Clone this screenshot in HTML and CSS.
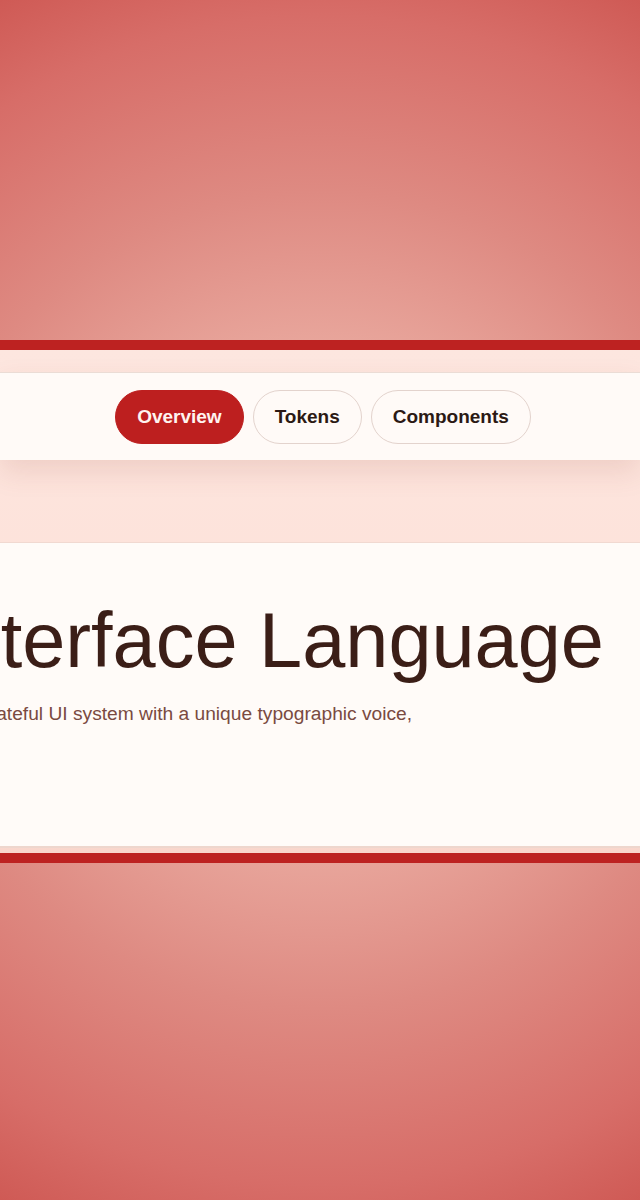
FILE: index.html
```html
<!DOCTYPE html>
<html lang="en">
<head>
<meta charset="utf-8">
<title>Interface Language</title>
<link rel="stylesheet" href="styles.css">
</head>
<body>
  <section class="band">
    <nav class="nav">
      <div class="pills">
        <a class="pill pill-active" href="#overview">Overview</a>
        <a class="pill" href="#tokens">Tokens</a>
        <a class="pill" href="#components">Components</a>
      </div>
    </nav>
    <main class="card">
      <div class="hero">
        <h1 class="title">Interface Language</h1>
        <p class="lead">It's a stateful UI system with a unique typographic voice,</p>
      </div>
    </main>
  </section>
</body>
</html>
```
FILE: styles.css
```css
* { box-sizing: border-box; }

html, body {
  margin: 0;
  padding: 0;
}

body {
  min-height: 100vh;
  padding-top: 3px;
  display: flex;
  align-items: center;
  overflow-x: hidden;
  font-family: "Liberation Sans", Arial, sans-serif;
  background: radial-gradient(circle farthest-corner at 50% 50%, #f2c2b6 0%, #e8a59b 38%, #de8a82 60%, #d76d68 86%, #cf5a55 100%);
}

.band {
  width: 100%;
  border-top: 10px solid #bd2221;
  border-bottom: 10px solid #bd2221;
  background: linear-gradient(180deg, #fde6df 0%, #fde2da 50%, #f9d6cc 100%);
  padding: 22px 0 7px;
  display: flex;
  flex-direction: column;
  gap: 82px;
}

.nav {
  background: #fffaf7;
  border-top: 1px solid #ebdcd5;
  padding: 17px 0 16px 6px;
  display: flex;
  justify-content: center;
  box-shadow: 0 12px 26px rgba(150, 60, 45, 0.13);
}

.pills {
  display: flex;
  gap: 9px;
}

.pill {
  display: block;
  padding: 15px 21px;
  border: 1px solid #e3d3cd;
  border-radius: 999px;
  font-size: 19px;
  line-height: 22px;
  font-weight: 700;
  color: #2b1914;
  text-decoration: none;
  background: #fffaf7;
}

.pill-active {
  background: #bd1f1f;
  border-color: #bd1f1f;
  color: #fff4f0;
}

.card {
  display: flex;
  justify-content: center;
  min-height: 304px;
  background: #fffbf8;
  border-top: 1px solid #f1d9d1;
  box-shadow: 0 2px 0 #eed6cd;
  padding: 56px 0 0;
}

.hero {
  flex: 0 0 768px;
  width: 768px;
}

.title {
  margin: 0;
  font-size: 77.5px;
  line-height: 1.08;
  font-weight: 400;
  color: #3b1e17;
  white-space: nowrap;
}

.lead {
  margin: 17px 0 0;
  font-size: 19.2px;
  line-height: 28px;
  color: #7a4a41;
  white-space: nowrap;
}
```
